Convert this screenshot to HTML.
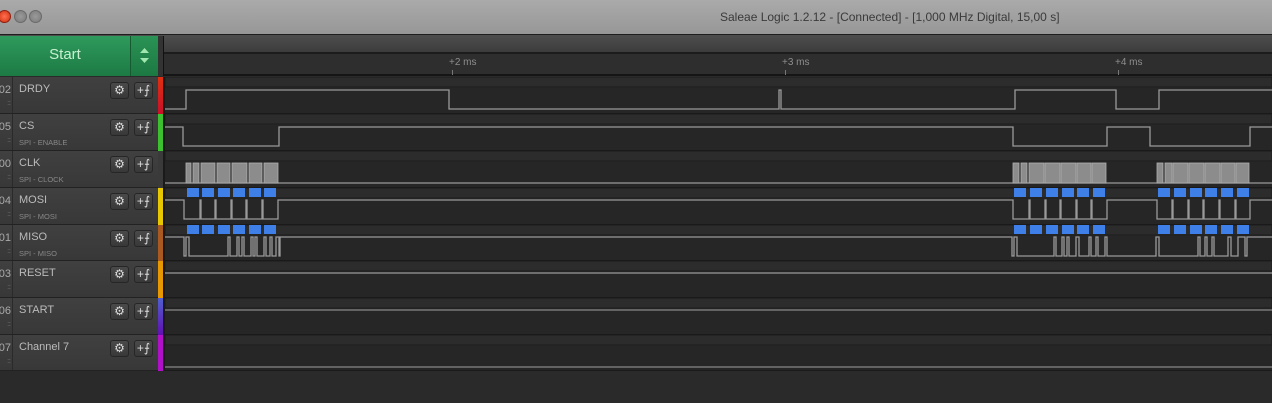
<!DOCTYPE html>
<html><head><meta charset="utf-8"><style>
*{margin:0;padding:0;box-sizing:border-box}
body{width:1272px;height:403px;overflow:hidden;background:#2a2a2a;font-family:"Liberation Sans",sans-serif;position:relative}
.abs{position:absolute}
#title{left:0;top:0;width:1272px;height:35px;background:linear-gradient(#aaa,#979797);border-bottom:1px solid #1e1e1e}
#title .t{position:absolute;left:720px;top:10px;font-size:12px;color:#3a3a3a}
.wb{position:absolute;top:10px;width:13px;height:13px;border-radius:50%;border:1px solid #6a6a6a;background:radial-gradient(#9a9a9a,#7a7a7a)}
#tool{left:0;top:35px;width:1272px;height:19px;background:linear-gradient(#4e4e4e,#3c3c3c);border-bottom:2px solid #1c1c1c}
#ruler{left:160px;top:54px;width:1112px;height:22px;background:#2e2e2e;border-bottom:2px solid #151515}
.tk{position:absolute;top:3px;font-size:10px;color:#8e8e8e}
#start{left:0;top:36px;width:131px;height:40px;background:linear-gradient(#2e9a5c,#1d7a44);color:#c8f0d0;font-size:15px;text-align:center;line-height:38px;border-right:1px solid #155a30}
#arr{left:131px;top:36px;width:27px;height:40px;background:linear-gradient(#2a9355,#1c7842)}
.row{position:absolute;left:0;width:158px;background:linear-gradient(#404040,#383838);border-bottom:1px solid #222}
.row .n{position:absolute;left:0;top:0;width:13px;height:100%;border-right:1px solid #2a2a2a;font-size:11px;color:#aaa;overflow:hidden}
.row .n span{position:absolute;right:1px;top:7px}
.row .d{position:absolute;right:2px;top:23px;font-size:7px;color:#666;letter-spacing:-1px}
.row .l{position:absolute;left:19px;top:6px;font-size:11px;color:#bbb}
.row .s{position:absolute;left:19px;top:24px;font-size:7.5px;color:#888}
.btn{position:absolute;top:5px;width:19px;height:17px;border:1px solid #262626;border-radius:3px;background:linear-gradient(#4a4a4a,#383838);color:#ddd;font-size:12px;text-align:center;line-height:15px}
.strip{position:absolute;left:158px;width:5px}
</style></head><body>
<div id="title" class="abs">
<div class="wb" style="left:-2px;background:radial-gradient(#ff7050,#d03010);border-color:#902010"></div>
<div class="wb" style="left:14px"></div>
<div class="wb" style="left:29px"></div>
<div class="t">Saleae Logic 1.2.12 - [Connected] - [1,000 MHz Digital, 15,00 s]</div>
</div>
<div id="tool" class="abs"></div>
<div id="ruler" class="abs">
<div class="abs" style="left:0;top:4px;width:2px;height:14px;background:#777"></div>
<div class="tk" style="left:289px">+2 ms</div><div class="abs" style="left:292px;top:16px;width:1px;height:5px;background:#777"></div>
<div class="tk" style="left:622px">+3 ms</div><div class="abs" style="left:625px;top:16px;width:1px;height:5px;background:#777"></div>
<div class="tk" style="left:955px">+4 ms</div><div class="abs" style="left:958px;top:16px;width:1px;height:5px;background:#777"></div>
</div>
<div class="abs" style="left:158px;top:36px;width:6px;height:40px;background:#333;border-right:1px solid #111"></div>
<div id="start" class="abs">Start</div>
<div id="arr" class="abs"><svg width="27" height="40"><path d="M9 17 L13.5 12 L18 17Z M9 22 L18 22 L13.5 27Z" fill="#a0e8b0"/></svg></div>

<div class="row" style="top:77px;height:37px"><div class="n"><span>02</span><div class="d">:::</div></div><div class="l">DRDY</div><div class="btn" style="left:110px">⚙</div><div class="btn" style="left:134px">+⨍</div></div>
<div class="row" style="top:114px;height:37px"><div class="n"><span>05</span><div class="d">:::</div></div><div class="l">CS</div><div class="s">SPI - ENABLE</div><div class="btn" style="left:110px">⚙</div><div class="btn" style="left:134px">+⨍</div></div>
<div class="row" style="top:151px;height:37px"><div class="n"><span>00</span><div class="d">:::</div></div><div class="l">CLK</div><div class="s">SPI - CLOCK</div><div class="btn" style="left:110px">⚙</div><div class="btn" style="left:134px">+⨍</div></div>
<div class="row" style="top:188px;height:37px"><div class="n"><span>04</span><div class="d">:::</div></div><div class="l">MOSI</div><div class="s">SPI - MOSI</div><div class="btn" style="left:110px">⚙</div><div class="btn" style="left:134px">+⨍</div></div>
<div class="row" style="top:225px;height:36px"><div class="n"><span>01</span><div class="d">:::</div></div><div class="l">MISO</div><div class="s">SPI - MISO</div><div class="btn" style="left:110px">⚙</div><div class="btn" style="left:134px">+⨍</div></div>
<div class="row" style="top:261px;height:37px"><div class="n"><span>03</span><div class="d">:::</div></div><div class="l">RESET</div><div class="btn" style="left:110px">⚙</div><div class="btn" style="left:134px">+⨍</div></div>
<div class="row" style="top:298px;height:37px"><div class="n"><span>06</span><div class="d">:::</div></div><div class="l">START</div><div class="btn" style="left:110px">⚙</div><div class="btn" style="left:134px">+⨍</div></div>
<div class="row" style="top:335px;height:36px"><div class="n"><span>07</span><div class="d">:::</div></div><div class="l">Channel 7</div><div class="btn" style="left:110px">⚙</div><div class="btn" style="left:134px">+⨍</div></div>

<div class="strip" style="top:77px;height:37px;background:linear-gradient(#e03010,#c8102a)"></div>
<div class="strip" style="top:114px;height:37px;background:#3cc030"></div>
<div class="strip" style="top:151px;height:37px;background:#3a3a3a"></div>
<div class="strip" style="top:188px;height:37px;background:#e8c800"></div>
<div class="strip" style="top:225px;height:36px;background:#a85a20"></div>
<div class="strip" style="top:261px;height:37px;background:#e89800"></div>
<div class="strip" style="top:298px;height:37px;background:linear-gradient(#5060d0,#6010b0)"></div>
<div class="strip" style="top:335px;height:36px;background:#b010c8"></div>
<div class="abs" style="left:163px;top:77px;width:2px;height:294px;background:#1a1a1a"></div>

<svg class="abs" style="left:165px;top:77px" width="1107" height="294">
<g transform="translate(-165,-77)">
<g fill="#2c2c2c" stroke="#1c1c1c" stroke-width="1">
<rect x="165" y="77" width="1107" height="10"/><rect x="165" y="114" width="1107" height="10"/><rect x="165" y="151" width="1107" height="10"/><rect x="165" y="188" width="1107" height="10"/><rect x="165" y="225" width="1107" height="10"/><rect x="165" y="261" width="1107" height="10"/><rect x="165" y="298" width="1107" height="10"/><rect x="165" y="335" width="1107" height="10"/>
</g>
<g fill="#262626">
<rect x="165" y="88" width="1107" height="25"/><rect x="165" y="125" width="1107" height="25"/><rect x="165" y="162" width="1107" height="25"/><rect x="165" y="199" width="1107" height="25"/><rect x="165" y="236" width="1107" height="24"/><rect x="165" y="272" width="1107" height="25"/><rect x="165" y="309" width="1107" height="25"/><rect x="165" y="346" width="1107" height="24"/>
</g>
<g stroke="#1a1a1a"><line x1="165" y1="113.5" x2="1272" y2="113.5"/><line x1="165" y1="150.5" x2="1272" y2="150.5"/><line x1="165" y1="187.5" x2="1272" y2="187.5"/><line x1="165" y1="224.5" x2="1272" y2="224.5"/><line x1="165" y1="260.5" x2="1272" y2="260.5"/><line x1="165" y1="297.5" x2="1272" y2="297.5"/><line x1="165" y1="334.5" x2="1272" y2="334.5"/><line x1="165" y1="370.5" x2="1272" y2="370.5"/></g>
<g fill="none" stroke="#9a9a9a" stroke-width="1.3">
<path d="M165 109H186V90H449V109H779V90H781V109H1015V90H1116V109H1159V90H1272"/>
<path d="M165 127H183V146H279V127H1013V146H1107V127H1150V146H1250V127H1272"/>
<path d="M165 183H1272"/>
<path d="M165 200H184V219H200V200H201V219H215V200H216V219H231V200H232V219H246V200H247V219H262V200H263V219H278V200H1013V219H1029V200H1030V219H1045V200H1046V219H1060V200H1061V219H1076V200H1077V219H1091V200H1092V219H1107V200H1157V219H1172V200H1173V219H1188V200H1189V219H1203V200H1204V219H1219V200H1220V219H1235V200H1236V219H1250V200H1272"/>
<path d="M165 237H184V256H186V237H189V256H228V237H230V256H237V237H239V256H242V237H244V256H251V237H253V256H255V237H257V256H264V237H266V256H270V237H272V256H276V237H279V256H280V237H1012V256H1014V237H1017V256H1054V237H1056V256H1062V237H1064V256H1067V237H1069V256H1076V237H1079V256H1089V237H1091V256H1096V237H1098V256H1105V237H1107V256H1156V237H1159V256H1198V237H1200V256H1205V237H1207V256H1212V237H1214V256H1228V237H1231V256H1238V237H1245V256H1247V237H1272"/>
<path d="M165 273H1272"/>
<path d="M165 310H1272" stroke="#888"/>
<path d="M165 367H1272" stroke="#888"/>
</g>
<g fill="#8c8c8c" stroke="#b0b0b0" stroke-width="0.8">
<rect x="186" y="163" width="5" height="20"/><rect x="193" y="163" width="6" height="20"/><rect x="201" y="163" width="14" height="20"/><rect x="217" y="163" width="13" height="20"/><rect x="232" y="163" width="15" height="20"/><rect x="249" y="163" width="13" height="20"/><rect x="264" y="163" width="14" height="20"/>
<rect x="1013" y="163" width="6" height="20"/><rect x="1021" y="163" width="6" height="20"/><rect x="1029" y="163" width="15" height="20"/><rect x="1045" y="163" width="15" height="20"/><rect x="1061" y="163" width="15" height="20"/><rect x="1077" y="163" width="14" height="20"/><rect x="1092" y="163" width="14" height="20"/>
<rect x="1157" y="163" width="6" height="20"/><rect x="1165" y="163" width="7" height="20"/><rect x="1173" y="163" width="15" height="20"/><rect x="1189" y="163" width="15" height="20"/><rect x="1205" y="163" width="15" height="20"/><rect x="1221" y="163" width="14" height="20"/><rect x="1236" y="163" width="13" height="20"/>
</g>
<g fill="#3f7fe8">
<rect x="187" y="188" width="12" height="9"/><rect x="202" y="188" width="12" height="9"/><rect x="218" y="188" width="12" height="9"/><rect x="233" y="188" width="12" height="9"/><rect x="249" y="188" width="12" height="9"/><rect x="264" y="188" width="12" height="9"/>
<rect x="1014" y="188" width="12" height="9"/><rect x="1030" y="188" width="12" height="9"/><rect x="1046" y="188" width="12" height="9"/><rect x="1062" y="188" width="12" height="9"/><rect x="1077" y="188" width="12" height="9"/><rect x="1093" y="188" width="12" height="9"/>
<rect x="1158" y="188" width="12" height="9"/><rect x="1174" y="188" width="12" height="9"/><rect x="1190" y="188" width="12" height="9"/><rect x="1205" y="188" width="12" height="9"/><rect x="1221" y="188" width="12" height="9"/><rect x="1237" y="188" width="12" height="9"/>
<rect x="187" y="225" width="12" height="9"/><rect x="202" y="225" width="12" height="9"/><rect x="218" y="225" width="12" height="9"/><rect x="233" y="225" width="12" height="9"/><rect x="249" y="225" width="12" height="9"/><rect x="264" y="225" width="12" height="9"/>
<rect x="1014" y="225" width="12" height="9"/><rect x="1030" y="225" width="12" height="9"/><rect x="1046" y="225" width="12" height="9"/><rect x="1062" y="225" width="12" height="9"/><rect x="1077" y="225" width="12" height="9"/><rect x="1093" y="225" width="12" height="9"/>
<rect x="1158" y="225" width="12" height="9"/><rect x="1174" y="225" width="12" height="9"/><rect x="1190" y="225" width="12" height="9"/><rect x="1205" y="225" width="12" height="9"/><rect x="1221" y="225" width="12" height="9"/><rect x="1237" y="225" width="12" height="9"/>
</g>
</g></svg>
</body></html>
